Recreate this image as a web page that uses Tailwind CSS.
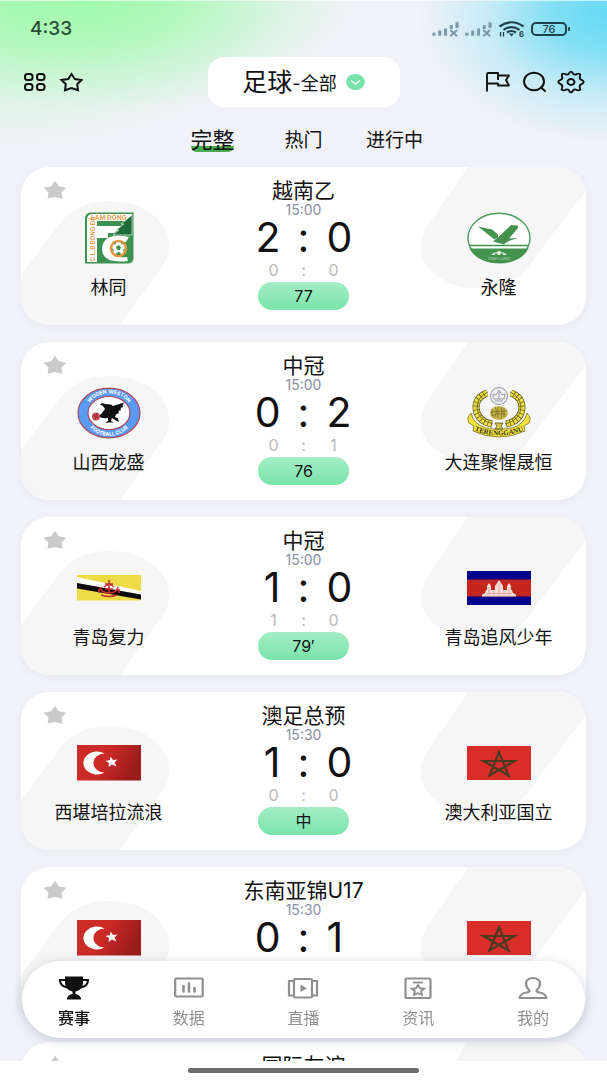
<!DOCTYPE html>
<html lang="zh-CN">
<head>
    <meta charset="UTF-8">
    <meta name="viewport" content="width=device-width, initial-scale=1.0">
    <title>赛事</title>
    <script src="https://cdn.jsdelivr.net/npm/@tailwindcss/browser@4"></script>
</head>
<body class="h-screen overflow-hidden flex flex-col border-t border-white/60 bg-[#f0f2f7] bg-[radial-gradient(ellipse_270px_110px_at_14%_0,#a2f9ae_0%,#a2f9aecc_30%,#a2f9ae55_65%,#a2f9ae00_100%),radial-gradient(ellipse_300px_150px_at_0_0,#a2f9aeaa_0%,#a2f9ae44_55%,#a2f9ae00_100%),radial-gradient(ellipse_190px_130px_at_100%_14px,#66daf3_0%,#66daf3cc_28%,#66daf344_65%,#66daf300_100%)] bg-no-repeat font-['Inter','Noto_Sans_CJK_SC',sans-serif] text-[#111]">

    <!-- Shared artwork -->
    <svg class="absolute size-0" aria-hidden="true">
        <symbol id="star" viewBox="0 0 24 20">
            <path d="M12 0.800L15.800 6.300L23.400 7.800L18.500 12.500L19.500 18.800L12 17L4.500 18.800L5.500 12.500L0.600 7.800L8.200 6.300Z" fill="currentColor"/>
        </symbol>
        <symbol id="signal" viewBox="0 0 28 16">
            <path d="M2 15V12M8 15V9.500M14 15V7.500M20 8V4M26 7V1" stroke="currentColor" stroke-width="3.200"/>
            <path d="M19 9L26 15.500M26 9L19 15.500" stroke="currentColor" stroke-width="2"/>
        </symbol>

        <symbol id="lamdong" viewBox="0 0 64 52">
            <path d="M14 0.500H56.500V46Q56.500 51.500 50 51.500H8V7Q8 0.500 14 0.500Z" fill="#3c9150"/>
            <path d="M15 2H55V9H20V50H10V8Q10 2 15 2Z" fill="#fff"/>
            <path d="M20 14H46L37 21H31V26H20Z" fill="#fff"/>
            <path d="M20 26H31L24 36V49H20Z" fill="#3c9150"/>
            <path d="M55 3V23L36 23L42 18L39 18L47 12L44 12Z" fill="#1f6b39" stroke="#fff" stroke-width="0.600"/>
            <path d="M52 25Q26 20 25 37Q25 52 51 49L50 45Q35 47 34 37Q34 28 49 30Z" fill="#fff"/>
            <circle cx="41.500" cy="36.500" r="7.500" fill="#fff" stroke="#e2953c" stroke-width="2.500"/>
            <path d="M39 35L41.500 33L44 35L43 38H40ZM35 36L37 38L36 40ZM48 36L46 38L47 40ZM39 41L41.500 40L44 41L43 43H40ZM37 31L39 30L38 33ZM46 31L44 30L45 33Z" fill="#3c9150"/>
            <text x="14" y="8.200" font-size="6.500" font-weight="600" fill="#e2953c">LÂM ĐỒNG</text>
            <text transform="translate(17.500 49.500) rotate(-90)" font-size="6" font-weight="600" fill="#e2953c">C.L.B BÓNG ĐÁ</text>
        </symbol>

        <symbol id="vinhlong" viewBox="0 0 64 52">
            <ellipse cx="32" cy="26" rx="31" ry="24.800" fill="#fff" stroke="#4a9a5c" stroke-width="1.400"/>
            <path d="M2 33.500H62" stroke="#43934f" stroke-width="1.600"/>
            <path d="M2.500 36.500H61.500Q54 51 32 51T2.500 36.500Z" fill="#43934f"/>
            <path d="M11 14.500L25 17.500L31 22.500L31 25.500L27.500 27.500Z" fill="#43934f"/>
            <path d="M44 13L51 13.500V16L37 32.500L26 29.500L31 25.500Z" fill="#43934f"/>
            <path d="M51 26L41 26.500L37 31.500L43 28.500Z" fill="#43934f"/>
            <path d="M24 43L27 40.500L29 40.500L32 38.500L35 40.500L37 40.500L40 43H36V41.500H33.500V43H30.500V41.500H28V43Z" fill="#d9ecd9"/>
            <text x="32" y="47.500" font-size="4" text-anchor="middle" fill="#b6dab8">VINH LONG</text>
        </symbol>

        <symbol id="weston" viewBox="0 0 64 52">
            <ellipse cx="32" cy="26" rx="31" ry="24.800" fill="#5b9af2" stroke="#b1475a" stroke-width="1.200"/>
            <ellipse cx="32" cy="26" rx="21" ry="16.500" fill="#fff" stroke="#b1475a" stroke-width="1.200"/>
            <path id="weston-top" d="M10 20Q17 6.500 32 6.500T54 20" fill="none"/>
            <path id="weston-bottom" d="M7 33Q17 49 32 49T57 33" fill="none"/>
            <text font-size="5.200" font-weight="700" fill="#fff" text-anchor="middle"><textPath href="#weston-top" startOffset="50%">WODEN WESTON</textPath></text>
            <text font-size="5.200" font-weight="700" fill="#fff" text-anchor="middle"><textPath href="#weston-bottom" startOffset="50%">FOOTBALL CLUB</textPath></text>
            <path d="M23 17.500Q25 15.500 28 17L34 17.500L36 19L47 15.500L45.500 18.500L46 20L43.500 21L44 23L41.500 24L42 26L39 27.500L38 30L41 31.500L42 35L39 33.500L35 31L34 34L37 35.500L32 35.500L28 36L31 34V31Q24 32 22 29L25 26L28 22L26 19Z" fill="#111"/>
            <circle cx="19" cy="29.500" r="4" fill="#c94b50"/>
            <path d="M16 28L22 31M20 26L18 33" stroke="#6b2226" stroke-width="0.600"/>
        </symbol>

        <symbol id="terengganu" viewBox="0 0 64 52">
            <path d="M20 6Q9 10 9 21Q10 34 25 37M44 6Q55 10 55 21Q54 34 39 37" fill="none" stroke="#5f5a22" stroke-width="7"/>
            <path d="M20 6Q9 10 9 21Q10 34 25 37M44 6Q55 10 55 21Q54 34 39 37" fill="none" stroke="#eede42" stroke-width="5.600" stroke-dasharray="3 0.700"/>
            <path d="M21 5Q10 10 10 21Q11 33 26 37M43 5Q54 10 54 21Q53 33 38 37" fill="none" stroke="#6d6626" stroke-width="0.900"/>
            <circle cx="32" cy="9" r="8.500" fill="#f1f1f4" stroke="#8f8f96"/>
            <path d="M27 12L26 7L29 8L32 3L35 8L38 7L37 12ZM28 14H36M32 5V12" fill="none" stroke="#8f8f96" stroke-width="0.900"/>
            <ellipse cx="32" cy="26" rx="9" ry="7" fill="#c9b84a"/>
            <path d="M25 22V29M28 20Q31 25 27 31M31 20V31M34 20Q36 26 34 32M37 21V30M24 25L40 24M25 29Q32 25 39 28" fill="none" stroke="#77692a" stroke-width="0.800"/>
            <path d="M28 36H36L34 39L36 42H28L30 39Z" fill="#d8cb4a" stroke="#4d4a2a" stroke-width="0.800"/>
            <path d="M4 26Q-1 31 2 36L7 39L6 44Q32 56 58 44L57 39L62 36Q65 31 60 26Q58 37 45 41Q32 44 19 41Q6 37 4 26Z" fill="#f3e23c" stroke="#77702a" stroke-width="0.800"/>
            <path id="terengganu-banner" d="M6 43Q32 53.500 58 43" fill="none"/>
            <text font-size="7" font-weight="600" font-family="Liberation Serif" fill="#33301a" text-anchor="middle"><textPath href="#terengganu-banner" startOffset="50%">TERENGGANU</textPath></text>
        </symbol>

        <symbol id="brunei" viewBox="0 0 64 52">
            <path d="M0 13H64V38.500H0Z" fill="#eedc47"/>
            <path d="M0 15L64 29V33.500L0 21Z" fill="#fff"/>
            <path d="M0 21L64 32.500V37.500L0 26.500Z" fill="#0b0b0b"/>
            <path d="M32 18V32M28 22H36M27 25Q32 20 37 25M23 25Q24 31 32 31T41 25M24 33Q32 36 40 33M22 27V31M42 27V31M28 27H36" fill="none" stroke="#c92f2c" stroke-width="1.600"/>
        </symbol>

        <symbol id="cambodia" viewBox="0 0 64 52">
            <path d="M0 9H64V43H0Z" fill="#00008b"/>
            <path d="M0 17.500H64V34.500H0Z" fill="#c4261d"/>
            <path d="M15 34.500V32.500L18 31L19 28H20V24L22 21L24 24V28H28V24L30 21L32 18L34 21L36 24V28H40V24L42 21L44 24V28H45L46 31L49 32.500V34.500Z" fill="#f6dcd8"/>
            <path d="M19 31.500H45M22 25V34M32 22V34M42 25V34M27 29V34M37 29V34" stroke="#d98a84" stroke-width="0.600"/>
        </symbol>

        <linearGradient id="turkey-red" x1="0" y1="0" x2="1" y2="0.300">
            <stop offset="0.500" stop-color="#cb2a26"/>
            <stop offset="1" stop-color="#9c1c1b"/>
        </linearGradient>
        <symbol id="turkey" viewBox="0 0 64 52">
            <path d="M0 8H64V43.500H0Z" fill="url(#turkey-red)"/>
            <path d="M27.500 16.500A13.500 11.500 0 1 0 27.500 35.500A11 9.500 0 1 1 27.500 16.500Z" fill="#fff"/>
            <path d="M33.500 19.500L36 23L40.500 22.500L37.500 25.500L39.500 29.500L35 27.500L31.500 30L32 26L28.500 24L33 23Z" fill="#fff"/>
        </symbol>

        <symbol id="morocco" viewBox="0 0 64 52">
            <path d="M0 9H64V43H0Z" fill="#da2d29"/>
            <path d="M32 15L41.500 38.500L16.500 24H47.500L22.500 38.500Z" fill="none" stroke="#4a3a22" stroke-width="2.200"/>
        </symbol>
    </svg>

    <header class="shrink-0">
        <!-- Status bar -->
        <div class="flex items-center justify-between h-14 pl-[30px] pr-[37px]">
            <span class="text-[19px] font-medium text-[#2d4b36]">4:33</span>
            <div class="flex items-center gap-[6px] text-[#7b9aa8]">
                <svg class="w-[27px] h-4"><use href="#signal"/></svg>
                <svg class="w-[27px] h-4"><use href="#signal"/></svg>
                <svg class="w-[27px] h-4 text-[#20414b]" viewBox="0 0 27 16" fill="none" stroke="currentColor" stroke-width="2.200">
                    <path d="M1.500 5.500Q13.500 -3 25.500 5.500M5.500 8.800Q13.500 3.500 21.500 8.800M9 11.500Q13.500 8.500 18 11.500"/>
                    <path d="M11 12.500H16L13.500 15.500Z" fill="currentColor" stroke="none"/>
                    <path d="M2.500 11V15.500M5.500 15.500V11" stroke-width="1.300"/>
                    <text x="21" y="15.500" font-size="7.500" font-weight="700" fill="currentColor" stroke="none">6</text>
                </svg>
                <div class="flex items-center text-[#20414b]">
                    <span class="flex items-center justify-center w-9 h-[14px] rounded-[5px] border-2 border-current text-[11px] leading-3 font-medium">76</span>
                    <span class="ml-px w-[2px] h-1 rounded bg-current"></span>
                </div>
            </div>
        </div>

        <!-- Toolbar -->
        <div class="grid grid-cols-[1fr_192px_1fr] items-center h-[50px] px-[22px]">
            <div class="flex gap-[13px]">
                <button aria-label="分类">
                    <svg class="w-6 h-5" viewBox="0 0 24 20" fill="none" stroke="currentColor" stroke-width="2">
                        <rect x="3" y="2" width="7.500" height="6" rx="2.500"/>
                        <rect x="15" y="2" width="7.500" height="6" rx="2.500"/>
                        <rect x="3" y="12" width="7.500" height="6" rx="2.500"/>
                        <rect x="15" y="12" width="7.500" height="6" rx="2.500"/>
                    </svg>
                </button>
                <button aria-label="收藏">
                    <svg class="w-6 h-5" viewBox="0 0 24 20" fill="none" stroke="currentColor" stroke-width="2">
                        <path d="M12.500 2L15.800 7L22.500 8L18.200 12.200L19 18.200L12.500 16L6 18.200L6.800 12.200L2.500 8L9.200 7Z"/>
                    </svg>
                </button>
            </div>
            <button class="flex items-center justify-center h-[50px] rounded-2xl bg-white">
                <span class="text-[25px] leading-8">足球</span>
                <span class="text-lg leading-6 pt-1">-全部</span>
                <svg class="ml-[9px] w-[19px] h-[18px]" viewBox="0 0 19 18">
                    <ellipse cx="9.500" cy="9" rx="9.300" ry="8" fill="#77e3a6"/>
                    <path d="M5 7.500L9.500 11L14 7.500" fill="none" stroke="#fff" stroke-width="1.500"/>
                </svg>
            </button>
            <div class="flex justify-end gap-[10px]">
                <button aria-label="旗帜">
                    <svg class="w-[26px] h-6" viewBox="0 0 26 24" fill="none" stroke="currentColor" stroke-width="1.900" stroke-linejoin="round">
                        <path d="M2 21.500V4.500Q2 3 3.500 3H13V5.500H24L21 10L24 15.500H13V13.500H2M13 5.500V10"/>
                    </svg>
                </button>
                <button aria-label="搜索">
                    <svg class="w-[26px] h-6" viewBox="0 0 26 24" fill="none" stroke="currentColor" stroke-width="2" stroke-linecap="round">
                        <ellipse cx="13" cy="11.500" rx="10" ry="8.700"/>
                        <path d="M20 17.500L24 21"/>
                    </svg>
                </button>
                <button aria-label="设置">
                    <svg class="w-7 h-6" viewBox="0 0 28 24" fill="none" stroke="currentColor" stroke-width="1.900" stroke-linejoin="round">
                        <path d="M11.800 3.800Q14 -0.500 16.200 3.800Q17.500 5.200 19.500 4.200Q24.500 2.500 22.900 6.500Q22.200 8.700 24 9.700Q29.500 12 24 14.300Q22.200 15.300 22.900 17.500Q24.500 21.500 19.500 19.800Q17.500 18.800 16.200 20.200Q14 24.500 11.800 20.200Q10.500 18.800 8.500 19.800Q3.500 21.500 5.100 17.500Q5.800 15.300 4 14.300Q-1.500 12 4 9.700Q5.800 8.700 5.100 6.500Q3.500 2.500 8.500 4.200Q10.500 5.200 11.800 3.800Z"/>
                        <ellipse cx="14" cy="12" rx="3.500" ry="3"/>
                    </svg>
                </button>
            </div>
        </div>

        <!-- Filter tabs -->
        <nav class="flex justify-center h-[60px] pt-[21px]">
            <button class="flex items-start justify-center w-[91px] text-[22px] leading-6">
                <span class="relative px-px after:absolute after:inset-x-0.5 after:bottom-0 after:-z-10 after:h-[6px] after:rounded-b-md after:bg-[#49ad50]">完整</span>
            </button>
            <button class="flex items-start justify-center w-[91px] text-[19px] leading-[26px]">热门</button>
            <button class="flex items-start justify-center w-[91px] text-[19px] leading-[26px]">进行中</button>
        </nav>
    </header>

    <main id="matches" class="flex-1 min-h-0 overflow-y-auto [scrollbar-width:none] flex flex-col gap-[17px] px-[21px]"></main>

    <!-- Home indicator -->
    <div class="relative z-20 shrink-0 h-[19px] bg-white flex items-center justify-center">
        <div class="w-[231px] h-[5px] rounded-full bg-[#6c6c6c]"></div>
    </div>

    <!-- Bottom navigation -->
    <nav class="fixed z-10 inset-x-[22px] bottom-[42px] h-[77px] pt-1 px-9 flex items-center justify-between rounded-full bg-white shadow-[0_2px_12px_rgba(60,70,110,0.25)] text-[#8f8f8f] text-base leading-5">
        <a href="#" class="flex flex-col items-center gap-2 font-medium text-[#111]">
            <svg class="w-8 h-6" viewBox="0 0 32 24" fill="currentColor">
                <path d="M7 0.500H25V8Q24 14 17.500 15.500V18Q22 18.500 23 22.500V23.500H9V22.500Q10 18.500 14.500 18V15.500Q8 14 7 8Z"/>
                <path d="M7 4H2Q2 10 9 11.500M25 4H30Q30 10 23 11.500" fill="none" stroke="currentColor" stroke-width="2"/>
            </svg>
            赛事
        </a>
        <a href="#" class="flex flex-col items-center gap-2">
            <svg class="w-8 h-6" viewBox="0 0 32 24" fill="none" stroke="currentColor" stroke-width="2.200">
                <rect x="2.200" y="2.500" width="27.500" height="18" rx="1"/>
                <path d="M10.500 10V15.500M16 7.500V15.500M21.500 12V15.500" stroke-width="2.600" stroke-linecap="round"/>
            </svg>
            数据
        </a>
        <a href="#" class="flex flex-col items-center gap-2">
            <svg class="w-8 h-6" viewBox="0 0 32 24" fill="none" stroke="currentColor" stroke-width="2.200">
                <rect x="7" y="3" width="18" height="18.500" rx="1"/>
                <path d="M7 5H2V19.500H7M25 5H30V19.500H25"/>
                <path d="M13.500 8.500L20 12.200L13.500 16Z" fill="currentColor" stroke="none"/>
            </svg>
            直播
        </a>
        <a href="#" class="flex flex-col items-center gap-2">
            <svg class="w-8 h-6" viewBox="0 0 32 24" fill="none" stroke="currentColor" stroke-width="2.200">
                <rect x="3.500" y="2.500" width="25" height="19.500" rx="1.500"/>
                <path d="M11 6.500H21" stroke-width="1.800"/>
                <path d="M16 9L18 12.300L22 12.800L19.200 15.200L20 18.700L16 17.200L12 18.700L12.800 15.200L10 12.800L14 12.300Z" stroke-width="1.900"/>
            </svg>
            资讯
        </a>
        <a href="#" class="flex flex-col items-center gap-2">
            <svg class="w-8 h-6" viewBox="0 0 32 24" fill="none" stroke="currentColor" stroke-width="2.200" stroke-linejoin="round">
                <path d="M12.500 14.500Q9 11 9 7.500Q9.500 2 16 2T23 7.500Q23 11 19.500 14.500Q19.500 16 22.500 16.500Q28.500 17.500 29.500 22H2.500Q3.500 17.500 9.500 16.500Q12.500 16 12.500 14.500Z"/>
            </svg>
            我的
        </a>
    </nav>

    <script>
        const matches = [
            { league: '越南乙', time: '15:00', home: '林同', away: '永隆', homeLogo: 'lamdong', awayLogo: 'vinhlong', score: [2, 0], half: [0, 0], state: '77' },
            { league: '中冠', time: '15:00', home: '山西龙盛', away: '大连聚惺晟恒', homeLogo: 'weston', awayLogo: 'terengganu', score: [0, 2], half: [0, 1], state: '76' },
            { league: '中冠', time: '15:00', home: '青岛复力', away: '青岛追风少年', homeLogo: 'brunei', awayLogo: 'cambodia', score: [1, 0], half: [1, 0], state: '79′' },
            { league: '澳足总预', time: '15:30', home: '西堪培拉流浪', away: '澳大利亚国立', homeLogo: 'turkey', awayLogo: 'morocco', score: [1, 0], half: [0, 0], state: '中' },
            { league: '东南亚锦U17', time: '15:30', homeLogo: 'turkey', awayLogo: 'morocco', score: [0, 1] },
            { league: '国际友谊' }
        ];

        const team = (name, logo) => `
            <div class="relative w-[175px] pt-[45px] flex flex-col items-center gap-3">
                ${logo ? `<svg class="w-16 h-[52px]"><use href="#${logo}"/></svg>` : ''}
                ${name ? `<span class="text-lg leading-6 whitespace-nowrap">${name}</span>` : ''}
            </div>`;

        document.getElementById('matches').innerHTML = matches.map(m => `
            <article class="relative shrink-0 flex h-[158px] overflow-hidden rounded-[28px] bg-white shadow-[0_2px_8px_rgba(80,90,130,0.06)]">
                <svg class="absolute left-0 top-0 w-[150px] h-[158px]" viewBox="0 0 150 158" fill="#f6f6f6">
                    <path d="M0 108L38 57Q56 34 88 34Q126 34 143 60Q155 81 140 101L99 158H0Z"/>
                </svg>
                <svg class="absolute right-0 top-0 w-[170px] h-[158px]" viewBox="0 0 170 158" fill="#f6f6f6">
                    <path d="M52 0L12 58Q-5 85 17 106Q36 121 55 121H80Q103 116 118 92L170 23V0Z"/>
                </svg>
                <button class="absolute left-[22px] top-[13px] text-[#cacaca]" aria-label="收藏">
                    <svg class="w-6 h-5"><use href="#star"/></svg>
                </button>
                ${team(m.home, m.homeLogo)}
                <div class="relative flex-1 pt-[10px] flex flex-col items-center">
                    <h2 class="text-[21px] leading-7 whitespace-nowrap">${m.league}</h2>
                    ${m.time ? `<time class="text-sm leading-[10px] text-[#898ea6]">${m.time}</time>` : ''}
                    ${m.score ? `<div class="grid grid-cols-[1fr_46px_1fr] w-full text-[41px] leading-11">
                        <span class="text-right">${m.score[0]}</span>
                        <span class="text-center">:</span>
                        <span>${m.score[1]}</span>
                    </div>` : ''}
                    ${m.half ? `<div class="grid grid-cols-[30px_30px_30px] text-base leading-[23px] text-center text-[#b9b9b9]">
                        <span>${m.half[0]}</span>
                        <span>:</span>
                        <span>${m.half[1]}</span>
                    </div>` : ''}
                    ${m.state ? `<div class="w-[91px] h-7 rounded-full bg-linear-to-b from-[#a3edc6] to-[#78e4a8] text-base leading-7 text-center">${m.state}</div>` : ''}
                </div>
                ${team(m.away, m.awayLogo)}
            </article>`).join('');
    </script>
</body>
</html>
